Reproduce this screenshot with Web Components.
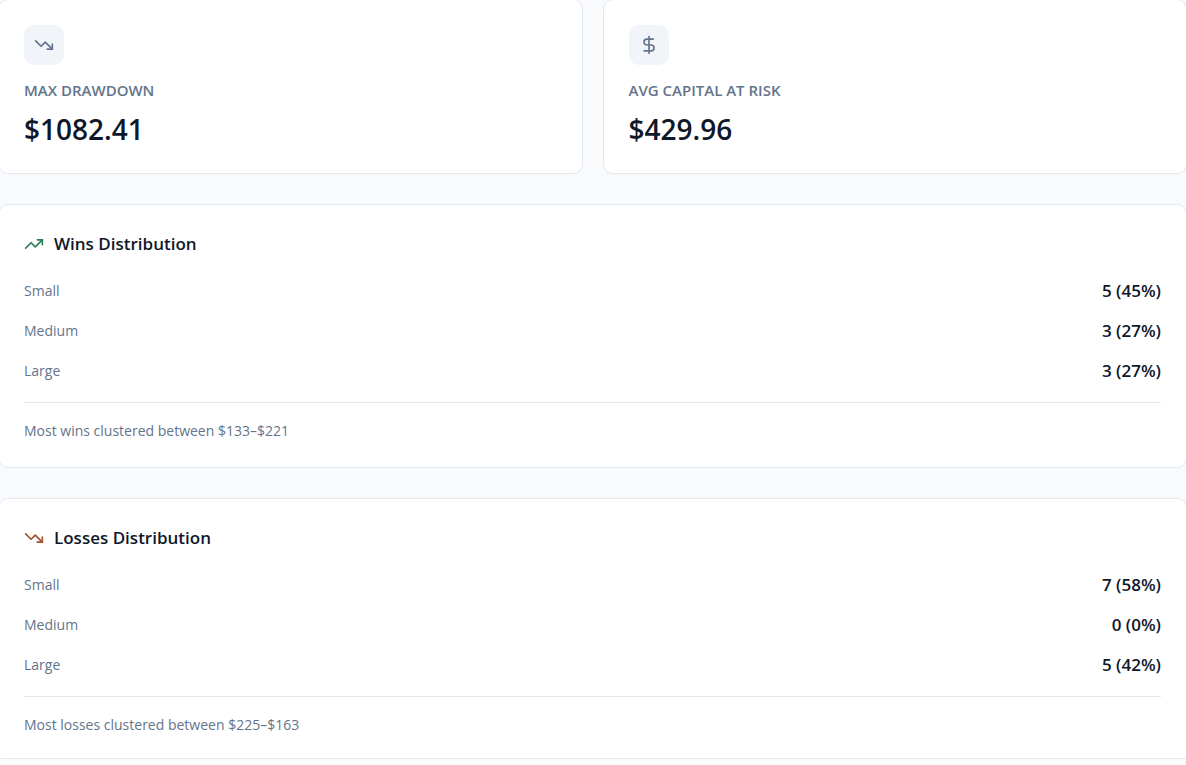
<!DOCTYPE html>
<html lang="en">
<head>
  <meta charset="UTF-8">
  <meta name="viewport" content="width=device-width, initial-scale=1.0">
  <title>Trade Statistics</title>
  <style>
    body {
      margin: 0;
      background-color: #f8fafc;
      color: #0f172a;
      font-family: "Segoe UI", "Open Sans", "Noto Sans", sans-serif;
      overflow: hidden;
    }
  </style>
</head>
<body>
  <stats-page></stats-page>

  <script>
    const icons = {
      up: '<path d="M22 7l-8.5 8.5-5-5L2 17"/><path d="M16 7h6v6"/>',
      down: '<path d="M22 17l-8.5-8.5-5 5L2 7"/><path d="M16 17h6v-6"/>',
      dollar: '<path d="M12 2v20"/><path d="M17 5H9.5a3.5 3.5 0 0 0 0 7h5a3.5 3.5 0 0 1 0 7H6"/>'
    };

    class StatIcon extends HTMLElement {

      constructor() {
        super();
        this.shadowDOM = this.attachShadow({ mode: 'open' });
      }

      connectedCallback() {
        this.render();
      }

      render() {
        this.shadowDOM.innerHTML = `
          <style>
          :host {
            display: block;
            width: 20px;
            height: 20px;
          }

          svg {
            display: block;
            width: 100%;
            height: 100%;
            fill: none;
            stroke: currentColor;
            stroke-width: 2;
            stroke-linecap: round;
            stroke-linejoin: round;
          }
          </style>

          <svg viewBox="0 0 24 24" aria-hidden="true">${icons[this.getAttribute('name')]}</svg>
        `;
      }
    }

    customElements.define('stat-icon', StatIcon);

    class MetricCard extends HTMLElement {

      constructor() {
        super();
        this.shadowDOM = this.attachShadow({ mode: 'open' });
      }

      connectedCallback() {
        this.render();
      }

      render() {
        this.shadowDOM.innerHTML = `
          <style>
          :host {
            display: block;
            padding: 25px;
            background-color: white;
            border: 1px solid #e2e8f0;
            border-radius: 10px;
          }

          .badge {
            display: flex;
            align-items: center;
            justify-content: center;
            width: 40px;
            height: 40px;
            border-radius: 10px;
            background-color: #f1f5f9;
            color: #64748b;
          }

          h3 {
            margin: 13px 0 8px;
            font-size: 15px;
            font-weight: 600;
            line-height: 24px;
            color: #64748b;
            text-transform: uppercase;
          }

          p {
            margin: 0;
            font-size: 28px;
            font-weight: 600;
            line-height: 38px;
          }
          </style>

          <div class="badge"><stat-icon name="${this.getAttribute('icon')}"></stat-icon></div>
          <h3>${this.getAttribute('label')}</h3>
          <p><slot></slot></p>
        `;
      }
    }

    customElements.define('metric-card', MetricCard);

    class DistributionRow extends HTMLElement {

      constructor() {
        super();
        this.shadowDOM = this.attachShadow({ mode: 'open' });
      }

      connectedCallback() {
        this.render();
      }

      render() {
        this.shadowDOM.innerHTML = `
          <style>
          :host {
            display: flex;
            justify-content: space-between;
            align-items: center;
            line-height: 25px;
          }

          .label {
            font-size: 14px;
            color: #64748b;
          }

          .value {
            font-size: 17px;
            font-weight: 600;
          }
          </style>

          <span class="label">${this.getAttribute('label')}</span>
          <span class="value"><slot></slot></span>
        `;
      }
    }

    customElements.define('distribution-row', DistributionRow);

    class DistributionCard extends HTMLElement {

      constructor() {
        super();
        this.shadowDOM = this.attachShadow({ mode: 'open' });
      }

      connectedCallback() {
        this.render();
      }

      render() {
        this.shadowDOM.innerHTML = `
          <style>
          :host {
            display: block;
            padding: 25px;
            background-color: white;
            border: 1px solid #e2e8f0;
            border-radius: 10px;
          }

          header {
            display: flex;
            align-items: center;
            gap: 10px;
            margin-bottom: 21px;
          }

          stat-icon {
            color: #2e7d5b;
          }

          :host([icon="down"]) stat-icon {
            color: #a0522d;
          }

          h2 {
            margin: 0;
            font-size: 17px;
            font-weight: 600;
            line-height: 27px;
          }

          .rows {
            display: flex;
            flex-direction: column;
            gap: 15px;
          }

          footer {
            margin-top: 19px;
            padding-top: 16px;
            border-top: 1px solid #e2e8f0;
            font-size: 14px;
            line-height: 23px;
            color: #64748b;
          }
          </style>

          <header>
            <stat-icon name="${this.getAttribute('icon')}"></stat-icon>
            <h2>${this.getAttribute('heading')}</h2>
          </header>
          <div class="rows"><slot></slot></div>
          <footer><slot name="note"></slot></footer>
        `;
      }
    }

    customElements.define('distribution-card', DistributionCard);

    class StatsPage extends HTMLElement {

      constructor() {
        super();
        this.shadowDOM = this.attachShadow({ mode: 'open' });
      }

      connectedCallback() {
        this.render();
      }

      render() {
        this.shadowDOM.innerHTML = `
          <style>
          :host {
            display: block;
          }

          /* outer card borders bleed past the edges of the window */
          main {
            display: flex;
            flex-direction: column;
            gap: 30px;
            margin: -1px -1px 0 -2px;
          }

          .metrics {
            display: grid;
            grid-template-columns: 1fr 1fr;
            gap: 20px;
          }

          distribution-card:last-child {
            padding-bottom: 22px;
            border-radius: 10px 10px 4px 4px;
          }
          </style>

          <main>
            <section class="metrics">
              <metric-card icon="down" label="Max Drawdown">$1082.41</metric-card>
              <metric-card icon="dollar" label="Avg Capital at Risk">$429.96</metric-card>
            </section>
            <distribution-card icon="up" heading="Wins Distribution">
              <distribution-row label="Small">5 (45%)</distribution-row>
              <distribution-row label="Medium">3 (27%)</distribution-row>
              <distribution-row label="Large">3 (27%)</distribution-row>
              <span slot="note">Most wins clustered between $133–$221</span>
            </distribution-card>
            <distribution-card icon="down" heading="Losses Distribution">
              <distribution-row label="Small">7 (58%)</distribution-row>
              <distribution-row label="Medium">0 (0%)</distribution-row>
              <distribution-row label="Large">5 (42%)</distribution-row>
              <span slot="note">Most losses clustered between $225–$163</span>
            </distribution-card>
          </main>
        `;
      }
    }

    customElements.define('stats-page', StatsPage);
  </script>
</body>
</html>
